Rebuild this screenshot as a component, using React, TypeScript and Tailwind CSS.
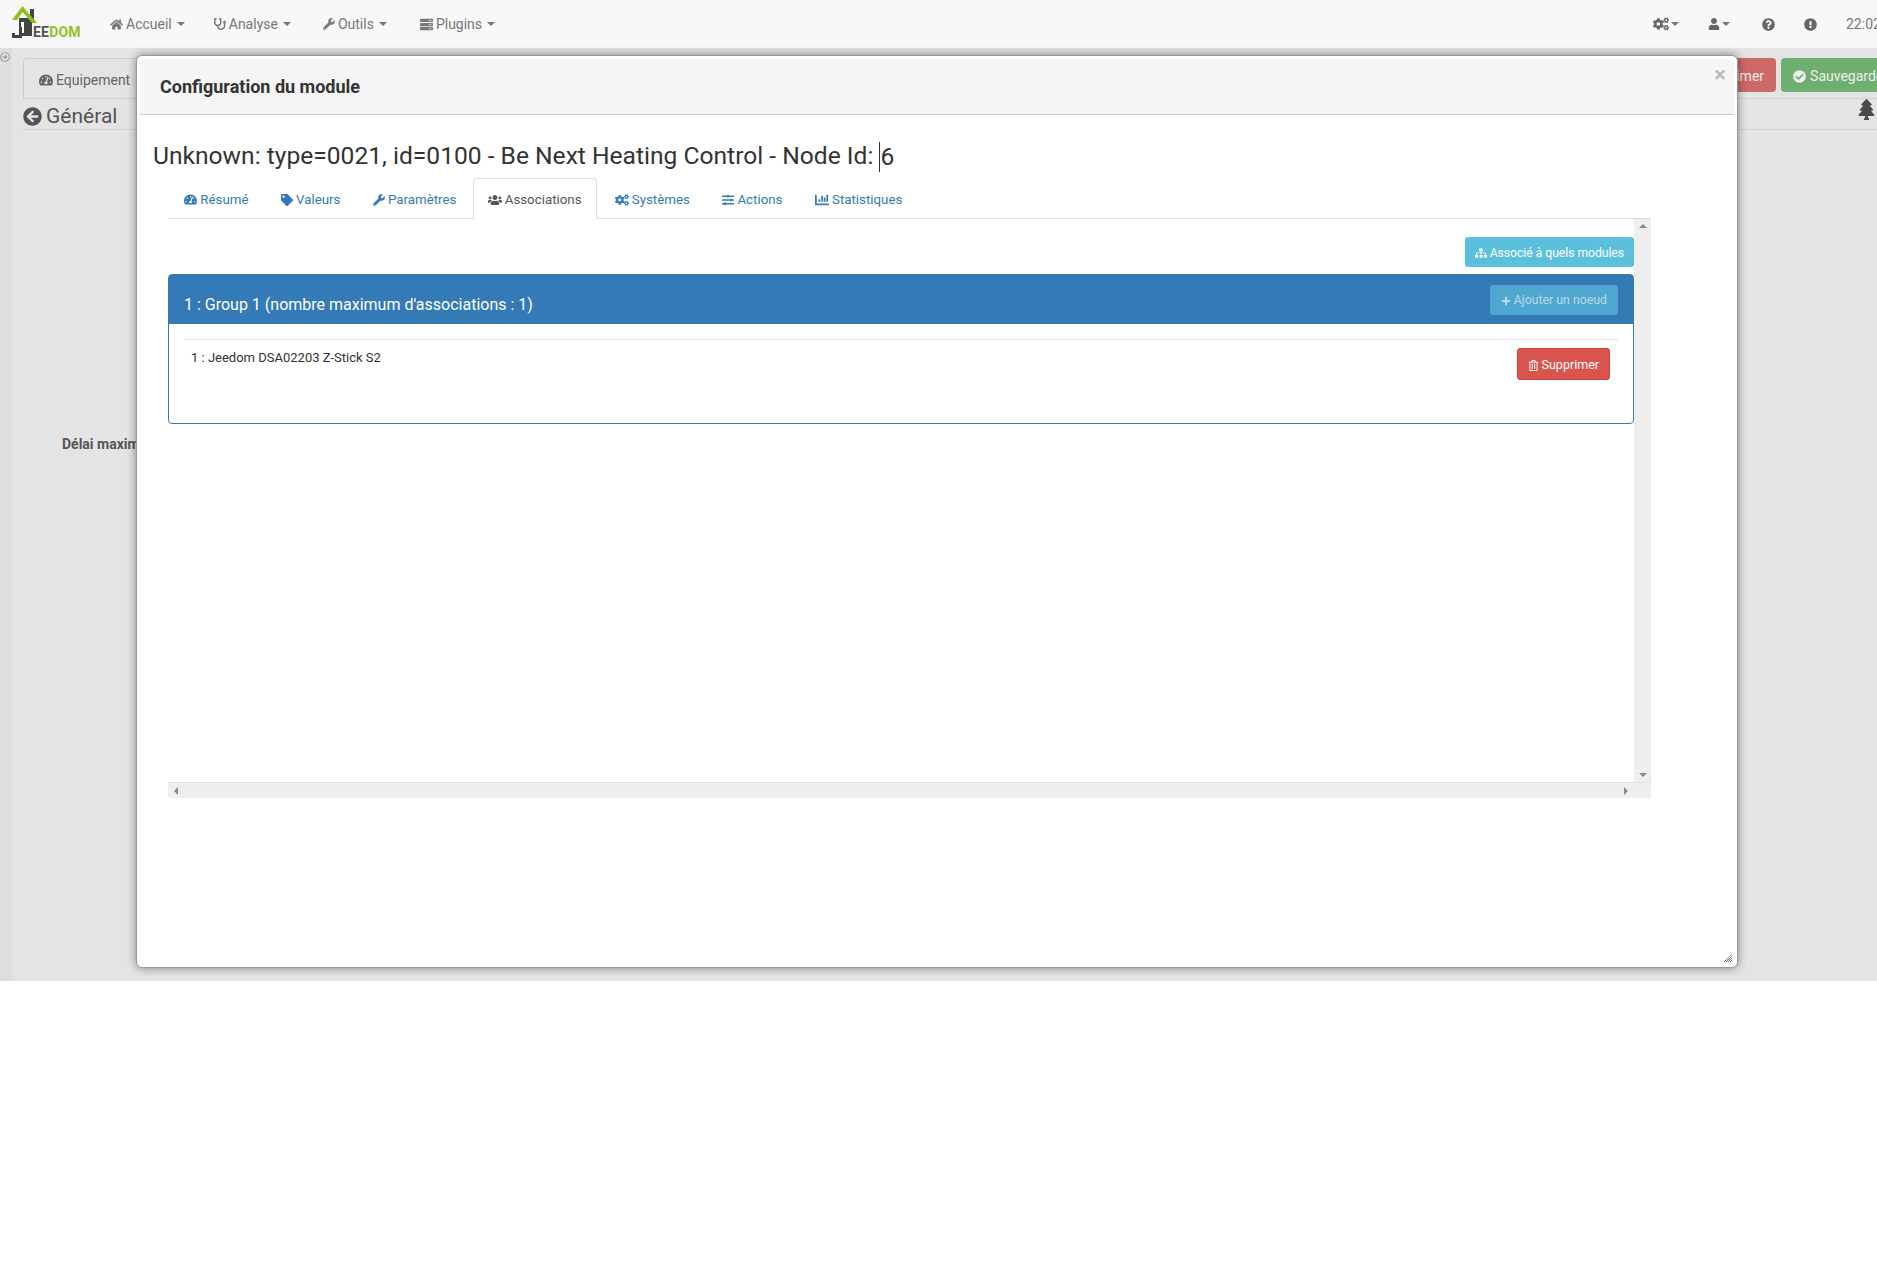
import type { ReactNode } from 'react';
import {
  FaHome,
  FaStethoscope,
  FaWrench,
  FaServer,
  FaCogs,
  FaUser,
  FaQuestionCircle,
  FaExclamationCircle,
  FaTachometerAlt,
  FaTag,
  FaUsers,
  FaSlidersH,
  FaChartBar,
  FaSitemap,
  FaPlus,
  FaRegTrashAlt,
  FaCheckCircle,
  FaArrowCircleLeft,
  FaRegArrowAltCircleRight,
  FaTree,
} from 'react-icons/fa';

function Caret() {
  return <span className="ml-[2px] inline-block h-0 w-0 border-x-[4px] border-t-[4px] border-x-transparent border-t-[#777]" />;
}

function Logo() {
  return (
    <div className="flex h-12 w-[95px] items-end pb-[9px] pl-[12px]">
      <svg width="26" height="33" viewBox="0 0 26 33" className="shrink-0">
        <rect x="18" y="3" width="4" height="14" fill="#444" />
        <rect x="7" y="12" width="13" height="18" fill="#444" />
        <path d="M0 14 L10.5 0 L25 17 L20 17 L10.5 6 L5 14 Z" fill="#8fbf1f" />
        <rect x="9" y="16" width="3" height="11" fill="#fff" />
        <path d="M7 21 L10 21 L10 32 L0 32 L0 27 L3 27 L3 29 L7 29 Z" fill="#444" />
      </svg>
      <span className="-ml-[5px] text-[14px] leading-[13px] font-bold tracking-[0.2px] text-[#555]">
        EE<span className="text-[#93c01f]">DOM</span>
      </span>
    </div>
  );
}

function NavItem({ icon, label, className }: { icon: ReactNode; label: string; className: string }) {
  return (
    <div className={`flex items-center gap-[3px] px-[15px] text-[14px] text-[#777] ${className}`}>
      {icon}
      <span>{label}</span>
      <Caret />
    </div>
  );
}

function ModalTab({ icon, label, active }: { icon: ReactNode; label: string; active?: boolean }) {
  if (active) {
    return (
      <div className="-mb-px mr-[2px] flex h-[41px] items-center gap-[3px] rounded-t border border-b-0 border-[#ddd] bg-white px-[14px] pt-[1px] text-[13.3px] text-[#555]">
        {icon}
        {label}
      </div>
    );
  }
  return (
    <div className="flex h-10 items-center gap-[3px] px-[16.3px] pt-[3px] text-[13.3px] text-[#337ab7]">
      {icon}
      {label}
    </div>
  );
}

function ScrollArrow({ dir }: { dir: 'up' | 'down' | 'left' | 'right' }) {
  const points = {
    up: '0,6 4,2 8,6',
    down: '0,2 8,2 4,6',
    left: '6,0 6,8 2,4',
    right: '2,0 2,8 6,4',
  }[dir];
  return (
    <svg width="8" height="8" viewBox="0 0 8 8" className="shrink-0">
      <polygon points={points} fill="#888" />
    </svg>
  );
}

function ConfigModal() {
  return (
    <div className="absolute top-[55px] left-[136px] flex h-[913px] w-[1602px] flex-col rounded-md border border-[#999] bg-white p-[3px] shadow-[0_0_10px_rgba(0,0,0,0.45)]">
      <div className="relative flex h-[56px] shrink-0 items-center border-b border-[#ccc] bg-[#f5f5f5] pl-[20px] text-[18px] font-bold text-[#333]">
        Configuration du module
        <span className="absolute top-[1px] right-[8px] text-[22px] leading-[30px] font-bold text-[#bbb]">×</span>
      </div>

      <div className="flex flex-1 flex-col pr-[83px] pl-[13px]">
        <div className="flex h-[63px] shrink-0 items-center pt-[20px] text-[24.6px] text-[#333]">
          Unknown: type=0021, id=0100 - Be Next Heating Control - Node Id:&nbsp;
          <span className="border-l border-[#333] leading-[30px]">6</span>
        </div>

        <div className="ml-[15px] flex h-[620px] flex-col">
          {/* Tabs */}
          <div className="flex h-[41px] shrink-0 border-b border-[#ddd]">
            <ModalTab icon={<FaTachometerAlt size={13} />} label="Résumé" />
            <ModalTab icon={<FaTag size={12} />} label="Valeurs" />
            <ModalTab icon={<FaWrench size={12} />} label="Paramètres" />
            <ModalTab icon={<FaUsers size={14} />} label="Associations" active />
            <ModalTab icon={<FaCogs size={14} />} label="Systèmes" />
            <ModalTab icon={<FaSlidersH size={12} />} label="Actions" />
            <ModalTab icon={<FaChartBar size={14} />} label="Statistiques" />
          </div>

          {/* Scrolling pane */}
          <div className="flex min-h-0 flex-1">
            <div className="flex flex-1 flex-col pt-[18px]">
              <div className="flex justify-end">
                <button className="flex h-[30px] items-center gap-[3px] rounded-[3px] bg-[#5bc0de] px-[10px] pt-[2px] text-[12.1px] text-white">
                  <FaSitemap size={12} />
                  Associé à quels modules
                </button>
              </div>
              <div className="mt-[7px] h-[150px] rounded border border-[#337ab7]">
                <div className="flex h-[49px] items-center justify-between bg-[#337ab7] pr-[15px] pl-[15px]">
                  <span className="pt-[11px] text-[16px] text-white">1 : Group 1 (nombre maximum d'associations : 1)</span>
                  <button className="flex h-[30px] items-center gap-[3px] rounded-[3px] bg-[#4fa6cf] px-[11px] pt-[2px] text-[12.3px] text-white/60">
                    <FaPlus size={10} />
                    Ajouter un noeud
                  </button>
                </div>
                <div className="mx-[15px] mt-[15px] flex items-start justify-between border-t border-[#e5e5e5] pt-[8px] pr-[8px] pl-[7px]">
                  <span className="text-[13px] text-[#333]">1 : Jeedom DSA02203 Z-Stick S2</span>
                  <button className="flex h-[32px] items-center gap-[3px] rounded-[3px] border border-[#d43f3a] bg-[#d9534f] px-[10px] pt-[2px] text-[12.5px] text-white">
                    <FaRegTrashAlt size={11} />
                    Supprimer
                  </button>
                </div>
              </div>
            </div>
            <div className="flex w-[17px] shrink-0 flex-col items-center justify-between bg-[#eee] py-[3px]">
              <ScrollArrow dir="up" />
              <ScrollArrow dir="down" />
            </div>
          </div>
          <div className="flex h-[16px] shrink-0 border-t border-[#e3e3e3] bg-[#eee]">
            <div className="flex flex-1 items-center justify-between px-[4px]">
              <ScrollArrow dir="left" />
              <ScrollArrow dir="right" />
            </div>
            <div className="w-[17px] shrink-0" />
          </div>
        </div>
      </div>

      <svg width="10" height="10" viewBox="0 0 10 10" className="absolute right-[4px] bottom-[4px]">
        <path d="M1 9 L9 1 M3 9 L9 3 M5 9 L9 5 M7 9 L9 7" stroke="#333" strokeWidth="1" strokeDasharray="1 0.6" />
      </svg>
    </div>
  );
}

export default function App() {
  return (
    <div className="relative bg-white font-['Roboto',sans-serif]">
      <div className="relative h-[981px] overflow-hidden bg-[#e4e4e4]">
        {/* Navbar */}
        <div className="flex h-12 items-stretch bg-[#f8f8f8]">
          <Logo />
          <NavItem className="mr-[-1px]" icon={<FaHome size={13} />} label="Accueil" />
          <NavItem className="mr-[2px]" icon={<FaStethoscope size={12} />} label="Analyse" />
          <NavItem className="mr-[3px]" icon={<FaWrench size={12} />} label="Outils" />
          <NavItem className="" icon={<FaServer size={13} />} label="Plugins" />
          <div className="mr-[-23px] ml-auto flex items-center text-[14px] text-[#777]">
            <div className="flex w-[55px] items-center"><FaCogs size={16} color="#666" /><Caret /></div>
            <div className="flex w-[54px] items-center"><FaUser size={12} color="#666" /><Caret /></div>
            <div className="w-[42px]"><FaQuestionCircle size={13} color="#666" /></div>
            <div className="w-[42px]"><FaExclamationCircle size={13} color="#666" /></div>
            <span>22:02:14</span>
          </div>
        </div>

        {/* Dimmed page behind the dialog */}
        <div className="flex h-[933px]">
          <div className="w-3 shrink-0 bg-[#dedede] pt-[4px] text-[#999]">
            <FaRegArrowAltCircleRight size={10} />
          </div>
          <div className="min-w-0 flex-1 pl-[11px] text-[#555]">
            <div className="mt-[10px] flex h-[41px] border-b border-[#d2d2d2]">
              <div className="flex h-[41px] items-center gap-[3px] rounded-t border border-b-0 border-[#ccc] pt-[2px] pr-[30px] pl-[15px] text-[14px] text-[#666]">
                <FaTachometerAlt size={14} />
                Equipement
              </div>
              <div className="mr-[-23px] ml-auto flex gap-[5px]">
                <div className="flex h-[34px] items-center rounded bg-[#cd6967] px-[12px] pt-[2px] text-[14px] text-[#eee]">Supprimer</div>
                <div className="flex h-[34px] items-center gap-[4px] rounded bg-[#6eae6e] px-[12px] pt-[2px] text-[14px] text-[#eee]">
                  <FaCheckCircle size={13} />
                  Sauvegarder
                </div>
              </div>
            </div>
            <div className="flex h-[31px] items-start justify-between border-b border-[#d2d2d2] text-[21px]">
              <div className="flex items-center gap-[4px] pt-[2px]">
                <FaArrowCircleLeft size={19} />
                <span>Général</span>
              </div>
              <FaTree size={21} className="text-[#4b4b4b]" />
            </div>
            <div className="mt-[304px] pl-[39px] text-[14px] font-bold">Délai maximum</div>
          </div>
        </div>

        <ConfigModal />
      </div>
      <div className="h-[299px] bg-white" />
    </div>
  );
}
